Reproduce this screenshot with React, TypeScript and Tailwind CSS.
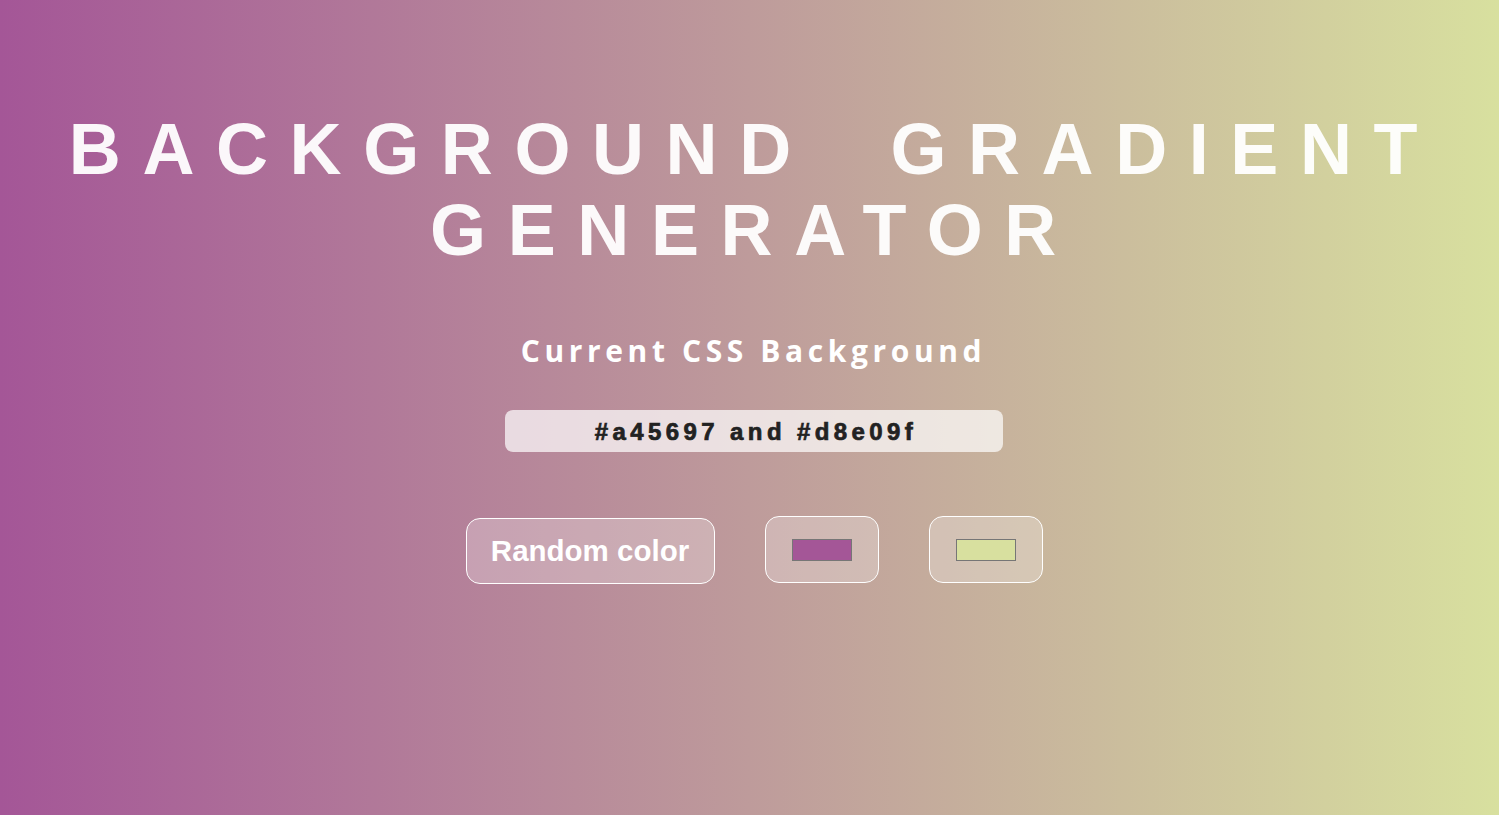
import React from "react";

export default function App() {
  return (
    <div
      className="w-full h-[815px] overflow-hidden flex flex-col items-center bg-[linear-gradient(to_right,#a45697,#d8e09f)]"
      style={{ fontFamily: '"Liberation Sans", Arial, sans-serif' }}
    >
      <h1 className="mt-[109px] pl-[9px] text-center text-[72px] leading-[81px] font-bold uppercase tracking-[0.3em] [word-spacing:36px] text-white/95 font-['Liberation_Sans',Arial,sans-serif]">
        Background Gradient
        <br />
        Generator
      </h1>
      <h3 className="mt-[60px] ml-[8px] text-[30px] leading-[40px] font-bold tracking-[4.6px] text-white font-['Open_Sans','Lato',sans-serif]">
        Current CSS Background
      </h3>
      <div className="mt-[39px] ml-[9px] w-[498px] h-[42px] rounded-[8px] bg-white/70 flex items-center justify-center">
        <span className="pl-[4px] pt-[2px] text-[24px] leading-[28px] font-bold tracking-[4.4px] text-[#222] [-webkit-text-stroke:0.7px_#222] font-['Liberation_Sans',Arial,sans-serif]">
          #a45697 and #d8e09f
        </span>
      </div>
      <div className="mt-[64px] ml-[9px] flex items-start gap-[50px]">
        <button className="mt-[2px] h-[66px] w-[249px] rounded-[14px] border border-white bg-white/25 text-white text-[29.5px] font-bold font-['Liberation_Sans',Arial,sans-serif]">
          Random color
        </button>
        <button className="h-[67px] w-[114px] rounded-[14px] border border-white bg-white/25 flex items-center justify-center">
          <span className="block w-[60px] h-[22px] bg-[#a45697] border border-[#767676]" />
        </button>
        <button className="h-[67px] w-[114px] rounded-[14px] border border-white bg-white/25 flex items-center justify-center">
          <span className="block w-[60px] h-[22px] bg-[#d8e09f] border border-[#767676]" />
        </button>
      </div>
    </div>
  );
}
